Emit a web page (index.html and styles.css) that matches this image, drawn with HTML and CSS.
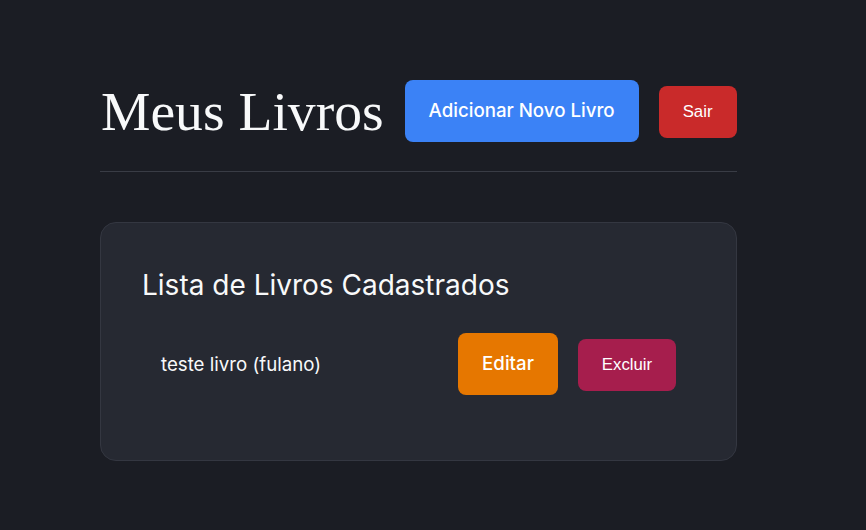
FILE: index.html
```html
<!DOCTYPE html>
<html lang="pt-BR">
<head>
<meta charset="utf-8">
<title>Meus Livros</title>
<link rel="stylesheet" href="styles.css">
</head>
<body>
<main class="container">
  <header class="header">
    <h1 class="title">Meus Livros</h1>
    <button class="btn btn-primary">Adicionar Novo Livro</button>
    <button class="btn btn-logout">Sair</button>
  </header>
  <section class="card">
    <h2 class="card-title">Lista de Livros Cadastrados</h2>
    <ul class="book-list">
      <li class="book-item">
        <span class="book-name">teste livro (fulano)</span>
        <div class="actions">
          <button class="btn btn-edit">Editar</button>
          <button class="btn btn-delete">Excluir</button>
        </div>
      </li>
    </ul>
  </section>
</main>
</body>
</html>
```
FILE: styles.css
```css
* { box-sizing: border-box; }
html, body {
  margin: 0;
  padding: 0;
  background: #1b1d24;
  color: #f1f3f5;
  font-family: "Inter", "Noto Sans", sans-serif;
}
.container {
  width: 637px;
  margin-left: 100px;
  padding-top: 78px;
}
.header {
  display: flex;
  align-items: center;
  gap: 20px;
  padding-bottom: 27px;
  border-bottom: 1px solid #393c45;
}
.title {
  margin: 0 1px 0 1px;
  font-family: "Liberation Serif", serif;
  font-weight: 400;
  font-size: 55.6px;
  line-height: 66px;
  color: #f8f9fa;
}
.btn {
  border: none;
  color: #ffffff;
  cursor: pointer;
}
.btn-primary {
  background: #3b82f6;
  font-family: "Inter", sans-serif;
  font-weight: 500;
  font-size: 18.7px;
  line-height: 22px;
  padding: 20px 0;
  border-radius: 8px;
  width: 234px;
}
.btn-logout {
  background: #c92a2a;
  font-family: "Liberation Sans", Arial, sans-serif;
  font-size: 16.8px;
  line-height: 18px;
  padding: 17px 0;
  width: 78px;
  margin-top: 2px;
  border-radius: 8px;
}
.card {
  margin-top: 50px;
  background: #262932;
  border: 1px solid #343741;
  border-radius: 16px;
  padding: 45px 41px;
}
.card-title {
  margin: 0 0 11px 0;
  font-weight: 400;
  font-size: 28px;
  line-height: 34px;
  color: #f8f9fa;
}
.book-list {
  list-style: none;
  margin: 0;
  padding: 0;
}
.book-item {
  display: flex;
  align-items: center;
  justify-content: space-between;
  padding: 20px 19px;
}
.book-name {
  font-size: 18.7px;
  color: #f8f9fa;
}
.actions {
  display: flex;
  align-items: center;
  gap: 20px;
}
.btn-edit {
  background: #e67700;
  font-family: "Inter", sans-serif;
  font-weight: 500;
  font-size: 18.7px;
  line-height: 22px;
  padding: 20px 0;
  width: 100px;
  border-radius: 8px;
}
.btn-delete {
  background: #a61e4d;
  font-family: "Liberation Sans", Arial, sans-serif;
  font-size: 16.8px;
  line-height: 18px;
  padding: 17px 0;
  width: 98px;
  margin-top: 2px;
  border-radius: 8px;
}
```
